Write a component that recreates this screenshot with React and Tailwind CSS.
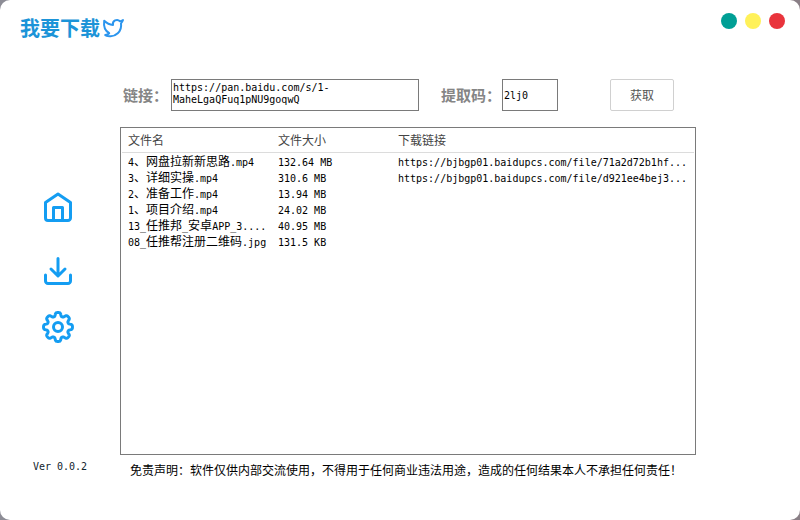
const files = [
  { name: '4、网盘拉新新思路.mp4', size: '132.64 MB', url: 'https://bjbgp01.baidupcs.com/file/71a2d72b1hf...' },
  { name: '3、详细实操.mp4', size: '310.6 MB', url: 'https://bjbgp01.baidupcs.com/file/d921ee4bej3...' },
  { name: '2、准备工作.mp4', size: '13.94 MB', url: '' },
  { name: '1、项目介绍.mp4', size: '24.02 MB', url: '' },
  { name: '13_任推邦_安卓APP_3....', size: '40.95 MB', url: '' },
  { name: '08_任推帮注册二维码.jpg', size: '131.5 KB', url: '' },
];

// Outline of an eight-toothed gear with rounded teeth, centred in a 32-unit box.
const gearPath =
  'M' +
  Array.from({ length: 160 }, (_, i) => {
    const angle = (i / 160) * 2 * Math.PI;
    const radius = 12.6 + 1.9 * Math.tanh(1.8 * Math.cos(8 * angle) + 0.4);
    return `${(16 + radius * Math.sin(angle)).toFixed(2)} ${(16 - radius * Math.cos(angle)).toFixed(2)}`;
  }).join('L') +
  'Z';

// Latin runs take half the width of a Chinese character, as in a console font.
function Mixed({ text }) {
  return text.split(/([\x20-\x7e]+)/).filter(Boolean).map((run, i) =>
    /^[\x20-\x7e]/.test(run) ? (
      <span key={i} className="font-['DejaVu_Sans_Mono',monospace] text-[10px] leading-none">{run}</span>
    ) : (
      <span key={i}>{run}</span>
    )
  );
}

function Bird() {
  return (
    <svg viewBox="0 0 24 24" className="h-6 w-6" fill="none" stroke="#2b95ee" strokeWidth="2" strokeLinecap="round" strokeLinejoin="round" aria-hidden="true">
      <path d="M22 4s-.7 2.1-2 3.400c1.200 8-5.500 14.300-13 12.600-1-.2-2-.6-2.800-1 1.600-.2 2.900-.7 4-1.800C4.500 15 2.400 10.500 3.200 4.800c2.400 2.400 5.400 4 8.800 4.200-.9-4.200 4-6.600 7-3.800 1.100 0 3-1.200 3-1.200z" />
    </svg>
  );
}

function NavIcon({ children }) {
  return (
    <svg viewBox="0 0 32 32" className="h-8 w-8" fill="none" stroke="#149df2" strokeWidth="3" strokeLinecap="round" strokeLinejoin="round" aria-hidden="true">
      {children}
    </svg>
  );
}

export default function App() {
  return (
    <div className="min-h-screen bg-linear-to-r from-[#8d8d96] to-[#8a7f86]">
      <div className="flex min-h-screen flex-col rounded-[10px] bg-white font-['Noto_Sans_CJK_SC',sans-serif] text-xs text-black">
        <header className="flex items-start justify-between pr-[15px] pl-5">
          <h1 className="mt-4 flex h-6 items-center gap-px text-xl font-bold text-[#1c94d8]">
            我要下载
            <Bird />
          </h1>
          <div className="mt-[13px] flex gap-2">
            <button aria-label="最大化" className="h-4 w-4 rounded-full bg-[#009f95]" />
            <button aria-label="最小化" className="h-4 w-4 rounded-full bg-[#fff159]" />
            <button aria-label="关闭" className="h-4 w-4 rounded-full bg-[#e9343c]" />
          </div>
        </header>

        <div className="flex flex-1">
          <nav className="flex w-[120px] shrink-0 flex-col items-center pt-[151px] pr-1 pb-[45px]">
            <button aria-label="首页" className="mb-8">
              <NavIcon>
                <path d="M3.500 11.500L16 3L28.500 11.500V27a2.500 2.500 0 0 1-2.500 2.500H6A2.500 2.500 0 0 1 3.500 27Z" />
                <path d="M11.500 29V16.500h9V29" />
              </NavIcon>
            </button>
            <button aria-label="下载" className="mb-6">
              <NavIcon>
                <path d="M16 3.500V20.500M9 14l7 7 7-7M3.500 20v6a2.500 2.500 0 0 0 2.500 2.500h20a2.500 2.500 0 0 0 2.500-2.500v-6" />
              </NavIcon>
            </button>
            <button aria-label="设置">
              <NavIcon>
                <circle cx="16" cy="16" r="4.500" />
                <path d={gearPath} />
              </NavIcon>
            </button>
            <p className="mt-auto pl-1 font-['DejaVu_Sans_Mono',monospace] text-[10px] leading-4 text-[#10242c]">Ver 0.0.2</p>
          </nav>

          <main className="flex min-w-0 flex-1 flex-col pt-[39px] pr-[104px] pb-[42px]">
            <form className="flex items-start pl-[3px]" onSubmit={(e) => e.preventDefault()}>
              <label htmlFor="link" className="w-12 shrink-0 text-[15px] leading-8 font-bold whitespace-nowrap text-[#858585]">链接：</label>
              <textarea id="link" defaultValue="https://pan.baidu.com/s/1-MaheLgaQFuq1pNU9goqwQ" className="h-8 min-w-0 flex-1 resize-none overflow-hidden border border-[#7a7a7a] px-px pt-[2px] pr-20 font-['DejaVu_Sans_Mono',monospace] text-[10px] leading-3 outline-none" />
              <label htmlFor="code" className="ml-[22px] w-[61px] shrink-0 text-[15px] leading-8 font-bold whitespace-nowrap text-[#858585]">提取码：</label>
              <input id="code" defaultValue="2lj0" className="h-8 w-14 border border-[#7a7a7a] px-px font-['DejaVu_Sans_Mono',monospace] text-[10px] outline-none" />
              <button className="mr-[22px] ml-[52px] h-8 w-16 rounded-[2px] border border-[#d0d0d0] text-[#555]">获取</button>
            </form>

            <div className="mt-4 flex-1 border border-[#7a7a7a] px-px">
              <table className="w-full table-fixed text-left">
                <thead>
                  <tr className="h-6 border-b border-[#dcdcdc] leading-4 text-[#444]">
                    <th className="w-[150px] pl-[6px] font-normal">文件名</th>
                    <th className="w-[120px] pl-[6px] font-normal">文件大小</th>
                    <th className="pl-[6px] font-normal">下载链接</th>
                  </tr>
                </thead>
                <tbody>
                  {files.map((f) => (
                    <tr key={f.name} className="h-4 leading-4 whitespace-nowrap">
                      <td className="pl-[6px]"><Mixed text={f.name} /></td>
                      <td className="pl-[6px]"><Mixed text={f.size} /></td>
                      <td className="pl-[6px]"><Mixed text={f.url} /></td>
                    </tr>
                  ))}
                </tbody>
              </table>
            </div>
            <p className="mt-[7px] pl-[10px] leading-4 whitespace-nowrap">免责声明：软件仅供内部交流使用，不得用于任何商业违法用途，造成的任何结果本人不承担任何责任！</p>
          </main>
        </div>
      </div>
    </div>
  );
}
